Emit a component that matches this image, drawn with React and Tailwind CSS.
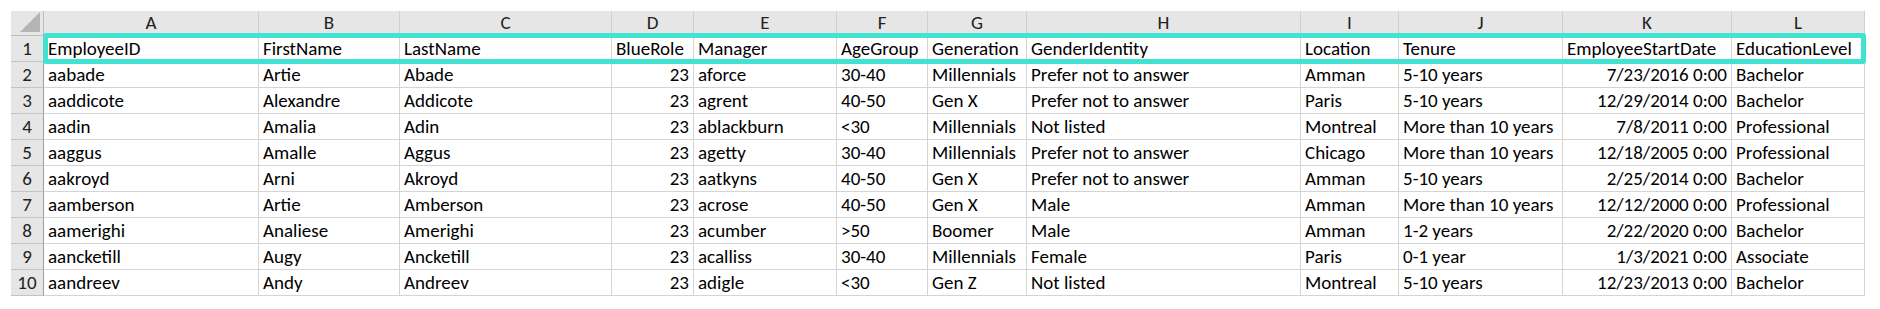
import React from "react";

const cols = ["A", "B", "C", "D", "E", "F", "G", "H", "I", "J", "K", "L"];

const rows = [
  ["EmployeeID", "FirstName", "LastName", "BlueRole", "Manager", "AgeGroup", "Generation", "GenderIdentity", "Location", "Tenure", "EmployeeStartDate", "EducationLevel"],
  ["aabade", "Artie", "Abade", "23", "aforce", "30-40", "Millennials", "Prefer not to answer", "Amman", "5-10 years", "7/23/2016 0:00", "Bachelor"],
  ["aaddicote", "Alexandre", "Addicote", "23", "agrent", "40-50", "Gen X", "Prefer not to answer", "Paris", "5-10 years", "12/29/2014 0:00", "Bachelor"],
  ["aadin", "Amalia", "Adin", "23", "ablackburn", "<30", "Millennials", "Not listed", "Montreal", "More than 10 years", "7/8/2011 0:00", "Professional"],
  ["aaggus", "Amalle", "Aggus", "23", "agetty", "30-40", "Millennials", "Prefer not to answer", "Chicago", "More than 10 years", "12/18/2005 0:00", "Professional"],
  ["aakroyd", "Arni", "Akroyd", "23", "aatkyns", "40-50", "Gen X", "Prefer not to answer", "Amman", "5-10 years", "2/25/2014 0:00", "Bachelor"],
  ["aamberson", "Artie", "Amberson", "23", "acrose", "40-50", "Gen X", "Male", "Amman", "More than 10 years", "12/12/2000 0:00", "Professional"],
  ["aamerighi", "Analiese", "Amerighi", "23", "acumber", ">50", "Boomer", "Male", "Amman", "1-2 years", "2/22/2020 0:00", "Bachelor"],
  ["aancketill", "Augy", "Ancketill", "23", "acalliss", "30-40", "Millennials", "Female", "Paris", "0-1 year", "1/3/2021 0:00", "Associate"],
  ["aandreev", "Andy", "Andreev", "23", "adigle", "<30", "Gen Z", "Not listed", "Montreal", "5-10 years", "12/23/2013 0:00", "Bachelor"],
];

// columns whose data (not the header row) is right aligned
const rightCols = [3, 10];

export default function App() {
  return (
    <div className="w-[1880px] h-[309px] bg-white pl-[11px] pt-[11px] font-['Carlito','Lato',sans-serif] text-[19px] text-black">
      <div className="relative w-max">
        <div className="grid grid-cols-[33px_215px_141px_212px_82px_143px_91px_99px_274px_98px_164px_169px_133px]">
          {/* corner */}
          <div className="h-[25px] bg-[#e6e6e6] border-r border-b border-[#bdbdbd] flex items-end justify-end p-[3px]">
            <svg width="20" height="20" viewBox="0 0 20 20">
              <polygon points="20,0 20,20 0,20" fill="#b4b4b4" />
            </svg>
          </div>
          {cols.map((c) => (
            <div
              key={c}
              className="h-[25px] bg-[#e6e6e6] border-r border-b border-r-[#d0d0d0] border-b-[#bdbdbd] flex items-end justify-center leading-none text-[#222]"
            >
              <span className="pb-[3px]">{c}</span>
            </div>
          ))}
          {rows.map((r, ri) => (
            <React.Fragment key={ri}>
              <div className="h-[26px] bg-[#e6e6e6] border-r border-b border-r-[#9e9e9e] border-b-[#c4c4c4] flex items-end justify-center leading-none text-[#222]">
                <span className="pb-[3px]">{ri + 1}</span>
              </div>
              {r.map((v, ci) => (
                <div
                  key={ci}
                  className={
                    "h-[26px] border-r border-b border-[#d4d4d4] flex items-end px-[4px] leading-none whitespace-nowrap overflow-hidden " +
                    (ri > 0 && rightCols.includes(ci) ? "justify-end" : "justify-start")
                  }
                >
                  <span className="pb-[3px]">{v}</span>
                </div>
              ))}
            </React.Fragment>
          ))}
        </div>
        {/* selection highlight around the header row */}
        <div className="absolute left-[32px] top-[22px] w-[1823px] h-[31px] border-[5px] border-[#41e2d2] rounded-[3px] pointer-events-none" />
      </div>
    </div>
  );
}
